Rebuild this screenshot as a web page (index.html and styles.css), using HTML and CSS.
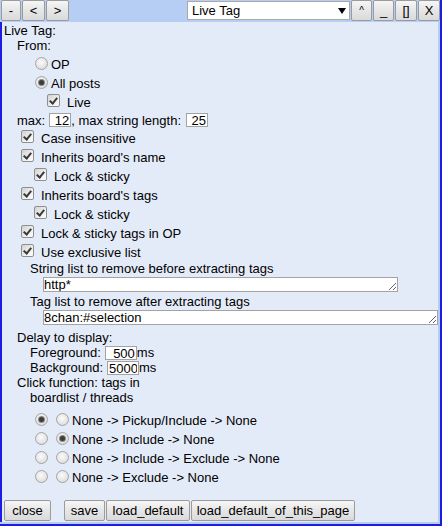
FILE: index.html
```html
<!DOCTYPE html>
<html>
<head>
<meta charset="utf-8">
<title>Live Tag</title>
<link rel="stylesheet" href="styles.css">
</head>
<body>
<div class="win">
  <div class="bar">
    <div class="grp">
      <button class="btn w20">-</button>
      <button class="btn w23">&lt;</button>
      <button class="btn w23">&gt;</button>
    </div>
    <div class="sel"><span class="sel-v">Live Tag</span><span class="arr"></span></div>
    <div class="grp">
      <button class="btn w21 caret">^</button>
      <button class="btn w21">_</button>
      <button class="btn w22">[]</button>
      <button class="btn w22">X</button>
    </div>
  </div>
  <div class="content">
    <div class="line">Live Tag:</div>
    <div class="line l1">From:</div>
    <div class="row l2"><span class="rb"></span><span class="rt">OP</span></div>
    <div class="row l2"><span class="rb on"></span><span class="rt">All posts</span></div>
    <div class="row l3"><span class="cb"></span><span class="ct">Live</span></div>
    <div class="mrow l1">
      <span class="mt">max:</span>
      <input class="num n22 gap1" type="text" value="12">
      <span class="mt">, max string length:</span>
      <input class="num n22 gap2" type="text" value="25">
    </div>
    <div class="row l1"><span class="cb"></span><span class="ct">Case insensitive</span></div>
    <div class="row l1"><span class="cb"></span><span class="ct">Inherits board's name</span></div>
    <div class="row l2"><span class="cb"></span><span class="ct">Lock &amp; sticky</span></div>
    <div class="row l1"><span class="cb"></span><span class="ct">Inherits board's tags</span></div>
    <div class="row l2"><span class="cb"></span><span class="ct">Lock &amp; sticky</span></div>
    <div class="row l1"><span class="cb"></span><span class="ct">Lock &amp; sticky tags in OP</span></div>
    <div class="row l1"><span class="cb"></span><span class="ct">Use exclusive list</span></div>
    <div class="lab l2">String list to remove before extracting tags</div>
    <textarea class="ta ta1">http*</textarea>
    <div class="lab lab2 l2">Tag list to remove after extracting tags</div>
    <textarea class="ta ta2">8chan:#selection</textarea>
    <div class="line l1 delay">Delay to display:</div>
    <div class="fline l2"><span>Foreground:</span><input class="num n32" type="text" value="500"><span>ms</span></div>
    <div class="fline l2"><span>Background:</span><input class="num n32" type="text" value="5000"><span>ms</span></div>
    <div class="line l1">Click function: tags in</div>
    <div class="line l2">boardlist / threads</div>
    <div class="clicks">
      <div class="row l2"><span class="rb on"></span><span class="rb"></span><span class="rt">None -&gt; Pickup/Include -&gt; None</span></div>
      <div class="row l2"><span class="rb"></span><span class="rb on"></span><span class="rt">None -&gt; Include -&gt; None</span></div>
      <div class="row l2"><span class="rb"></span><span class="rb"></span><span class="rt">None -&gt; Include -&gt; Exclude -&gt; None</span></div>
      <div class="row l2"><span class="rb"></span><span class="rb"></span><span class="rt">None -&gt; Exclude -&gt; None</span></div>
    </div>
    <div class="actions">
      <button class="btn b-close">close</button>
      <button class="btn b-save">save</button>
      <button class="btn b-ld">load_default</button>
      <button class="btn b-ldp">load_default_of_this_page</button>
    </div>
  </div>
</div>
</body>
</html>
```

FILE: styles.css
```css
* { box-sizing: border-box; }
html, body { margin: 0; padding: 0; }
body {
  font: 13px/15px "Liberation Sans", Arial, sans-serif;
  color: #000;
  background: #fff;
}
.win {
  width: 442px;
  height: 526px;
  background: #b6cdf4;
  border-right: 2px solid #1c1ce2;
  border-bottom: 2px solid #1c1ce2;
  display: flex;
  flex-direction: column;
}
.bar {
  height: 22px;
  flex: none;
  display: flex;
  align-items: flex-start;
  padding: 0 0 0 1px;
}
.grp { display: flex; gap: 1px; }
.btn {
  height: 21px;
  padding: 0;
  margin: 0;
  border: 1px solid #9b9b9b;
  border-radius: 2px;
  background: linear-gradient(#f6f6f6, #e6e6e6 50%, #dadada);
  font: 13px/15px "Liberation Sans", Arial, sans-serif;
  color: #000;
  display: flex;
  align-items: center;
  justify-content: center;
}
.w20 { width: 20px; }
.w21 { width: 21px; }
.w22 { width: 22px; }
.w23 { width: 23px; }
.caret { font-size: 10px; align-items: flex-start; padding-top: 2px; }
.sel {
  margin: 1px 1px 0 auto;
  width: 163px;
  height: 19px;
  background: #fff;
  border: 1px solid #a9a9a9;
  display: flex;
  align-items: center;
  padding: 0 3px 0 4px;
}
.sel-v { flex: 1; }
.arr {
  width: 0;
  height: 0;
  border-left: 4px solid transparent;
  border-right: 4px solid transparent;
  border-top: 6px solid #000;
}
.content {
  flex: 1;
  margin: 0 2px 2px 0;
  background: #e4ebf8;
  border-left: 2px solid #1c1ce2;
  padding: 1px 0 0 2px;
}
.l1 { padding-left: 13px; }
.l2 { padding-left: 26px; }
.l3 { padding-left: 39px; }
.line { height: 15px; white-space: nowrap; }
.row {
  height: 19px;
  display: flex;
  align-items: flex-start;
  white-space: nowrap;
}
.cb {
  flex: none;
  width: 13px;
  height: 13px;
  margin: 3px 3px 0 4px;
  border: 1px solid #8f8f8f;
  border-radius: 2px;
  background: linear-gradient(135deg, #d2d2d2, #f4f4f4 70%, #fbfbfb);
  display: flex;
  align-items: center;
  justify-content: center;
}
.cb::before {
  content: "";
  width: 3px;
  height: 6px;
  margin-top: -2px;
  border: solid #3a3a3a;
  border-width: 0 2px 2px 0;
  transform: rotate(40deg);
}
.ct { margin: 4px 0 0 4px; }
.rb {
  flex: none;
  width: 13px;
  height: 13px;
  margin: 4px 3px 0 5px;
  border: 1px solid #a4a4a4;
  border-radius: 50%;
  background: radial-gradient(circle at 45% 40%, #fbfbfb, #e6e6e6 55%, #cfcfcf);
  display: flex;
  align-items: center;
  justify-content: center;
}
.rb.on::before {
  content: "";
  width: 5px;
  height: 5px;
  border-radius: 50%;
  background: #3c3c3c;
  box-shadow: 0 0 0 1px #8a8a8a;
}
.rt { margin-top: 4px; }
.mrow {
  height: 17px;
  display: flex;
  align-items: flex-start;
  white-space: nowrap;
}
.mt { margin-top: 3px; }
.num {
  height: 14px;
  margin: 0;
  padding: 0 1px;
  border: 1px solid #a3a3a3;
  background: #fff;
  font: 13px/12px "Liberation Sans", Arial, sans-serif;
  color: #000;
  text-align: right;
  outline: none;
}
.n22 { width: 22px; margin-top: 3px; }
.gap1 { margin-left: 4px; }
.gap2 { margin-left: 5px; }
.n32 { width: 32px; margin: 1px 0 0 4px; }
.fline { height: 15px; display: flex; align-items: flex-start; white-space: nowrap; }
.lab { margin-top: 1px; height: 15px; white-space: nowrap; }
.lab2 { margin-top: 2px; }
.ta {
  display: block;
  margin: 1px 0 0 39px;
  height: 15px;
  padding: 0;
  border: 1px solid #a3a3a3;
  background: #fff;
  font: 13px/13px "Liberation Sans", Arial, sans-serif;
  color: #000;
  resize: both;
  overflow: hidden;
  white-space: nowrap;
  outline: none;
}
.ta1 { width: 355px; }
.ta2 { width: 395px; }
.delay { margin-top: 5px; }
.clicks { margin-top: 4px; }
.actions {
  display: flex;
  gap: 1px;
  margin-top: 15px;
}
.b-close { width: 47px; margin-right: 12px; }
.b-save { width: 41px; }
.b-ld { width: 84px; }
.b-ldp { width: 164px; }
```
